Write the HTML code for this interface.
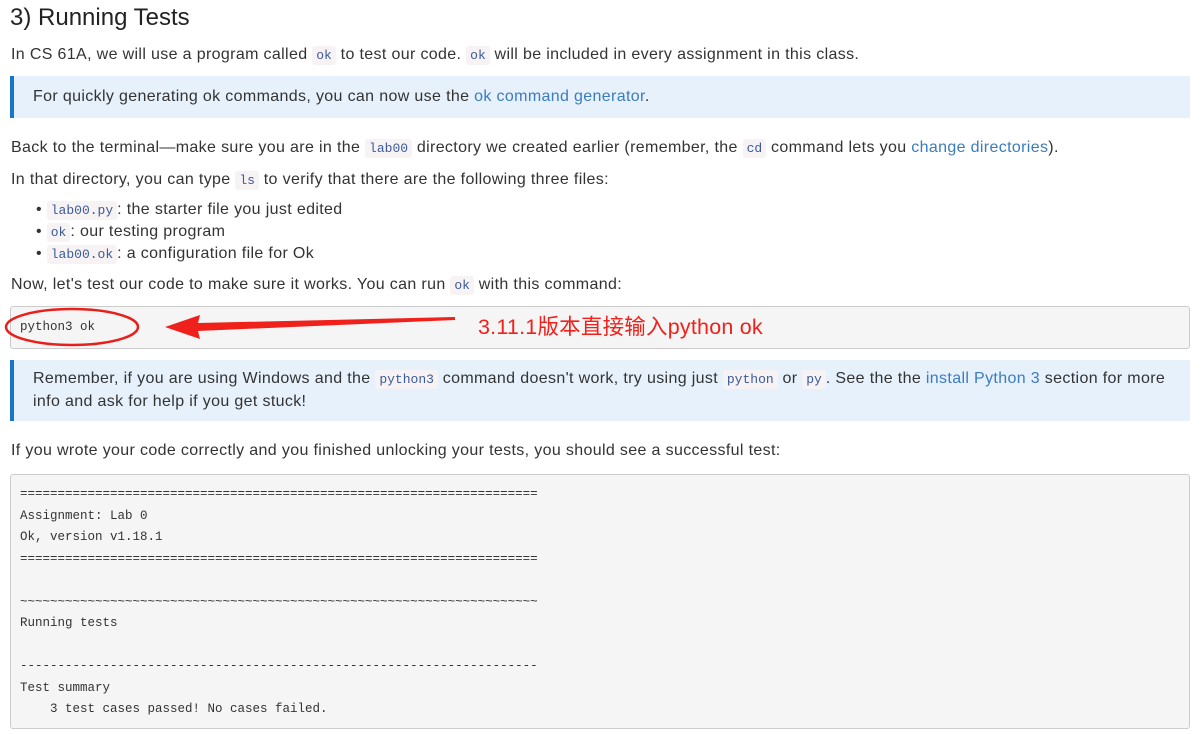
<!DOCTYPE html>
<html><head><meta charset="utf-8"><style>
body{margin:0;background:#fff;font-family:"Liberation Sans","DejaVu Sans",sans-serif;font-size:16px;letter-spacing:0.35px;color:#333;width:1203px;height:735px;overflow:hidden;position:relative}
.a{position:absolute;left:11px;white-space:nowrap}
h1{position:absolute;left:10px;top:4px;margin:0;font-size:24px;font-weight:500;color:#222;letter-spacing:0}
code{font-family:"Liberation Mono",monospace;font-size:13px;letter-spacing:0;color:#3a5b9a;background:#f7f2f3;padding:2px 4px;border-radius:3px}
a{color:#3b7bbf;text-decoration:none}
.call{position:absolute;left:10px;width:1180px;background:#e6f1fc;border-left:4px solid #1a74c8;box-sizing:border-box;padding-left:19px}
.box{position:absolute;left:10px;width:1180px;background:#f5f5f5;border:1px solid #ccc;border-radius:3px;box-sizing:border-box}
pre{margin:0;font-family:"Liberation Mono",monospace;font-size:12.5px;letter-spacing:0;color:#333;line-height:21.5px;padding:9px 9px}
</style></head><body>
<h1>3) Running Tests</h1>
<div class="a" style="top:46px">In CS 61A, we will use a program called <code>ok</code> to test our code. <code>ok</code> will be included in every assignment in this class.</div>
<div class="call" style="top:76px;height:42px;line-height:42px">For quickly generating ok commands, you can now use the <a>ok command generator</a>.</div>
<div class="a" style="top:139px">Back to the terminal—make sure you are in the <code>lab00</code> directory we created earlier (remember, the <code>cd</code> command lets you <a>change directories</a>).</div>
<div class="a" style="top:171px">In that directory, you can type <code>ls</code> to verify that there are the following three files:</div>
<div class="a" style="top:201px;left:36px">• <code>lab00.py</code>: the starter file you just edited</div>
<div class="a" style="top:223px;left:36px">• <code>ok</code>: our testing program</div>
<div class="a" style="top:245px;left:36px">• <code>lab00.ok</code>: a configuration file for Ok</div>
<div class="a" style="top:276px">Now, let's test our code to make sure it works. You can run <code>ok</code> with this command:</div>
<div class="box" style="top:306px;height:43px"><pre style="padding:10px 9px">python3 ok</pre></div>
<svg style="position:absolute;left:0;top:300px" width="800" height="60">
<ellipse cx="72" cy="27" rx="66" ry="18" fill="none" stroke="#e8201b" stroke-width="2.5"/>
<polygon points="165,27 200,15 198,23 455,17 455,20 198,31 200,39" fill="#f0201a"/>
<text x="478" y="34" fill="#f0201a" font-size="21.5" textLength="285" font-family="Liberation Sans,Noto Sans CJK SC,sans-serif">3.11.1版本直接输入python ok</text>
</svg>
<div class="call" style="top:360px;height:61px;line-height:22px;padding-top:8px;white-space:nowrap">Remember, if you are using Windows and the <code>python3</code> command doesn't work, try using just <code>python</code> or <code>py</code>. See the the <a>install Python 3</a> section for more<br>info and ask for help if you get stuck!</div>
<div class="a" style="top:442px">If you wrote your code correctly and you finished unlocking your tests, you should see a successful test:</div>
<div class="box" style="top:474px;height:255px"><pre>=====================================================================
Assignment: Lab 0
Ok, version v1.18.1
=====================================================================

~~~~~~~~~~~~~~~~~~~~~~~~~~~~~~~~~~~~~~~~~~~~~~~~~~~~~~~~~~~~~~~~~~~~~
Running tests

---------------------------------------------------------------------
Test summary
    3 test cases passed! No cases failed.</pre></div>
</body></html>
